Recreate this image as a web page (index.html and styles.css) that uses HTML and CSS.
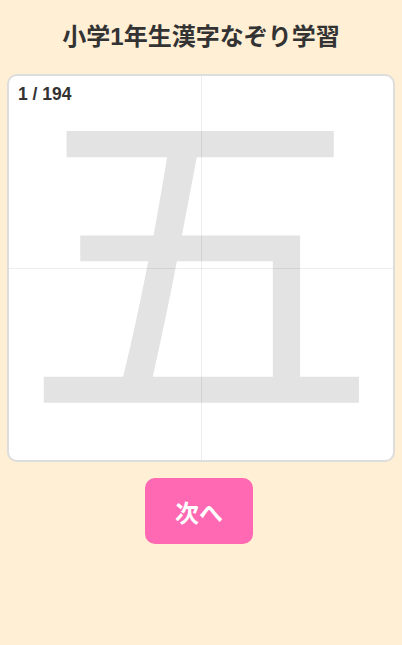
FILE: index.html
```html
<!DOCTYPE html>
<html lang="ja">

<head>
    <meta charset="UTF-8">
    <meta name="viewport" content="width=device-width, initial-scale=1.0">
    <title>小学1年生漢字なぞり学習</title>
    <link rel="stylesheet" href="styles.css">
</head>

<body>
<div class="app">
    <h1 class="title">小学1年生漢字なぞり学習</h1>

    <div class="board">
        <div class="counter">1 / 194</div>
        <div class="kanji">五</div>
        <div class="guide guide-v"></div>
        <div class="guide guide-h"></div>
    </div>

    <button class="next" type="button">次へ</button>
</div>
</body>

</html>
```

FILE: styles.css
```css
body {
    font-family: 'Liberation Sans', 'Noto Sans CJK JP', sans-serif;
    background-color: #ffefd5;
    margin: 0;
    color: #333;
}

.app {
    display: flex;
    flex-direction: column;
    align-items: center;
    padding: 0 7px;
}

.title {
    font-size: 24px;
    line-height: 34px;
    margin: 20px 0;
    font-weight: bold;
    color: #333;
}

.board {
    position: relative;
    width: 388px;
    height: 388px;
    box-sizing: border-box;
    background-color: #fff;
    border: 2px solid #ddd;
    border-radius: 10px;
    overflow: hidden;
    display: flex;
    align-items: center;
    justify-content: center;
}

.counter {
    position: absolute;
    top: 8px;
    left: 9px;
    font-size: 17.5px;
    font-weight: bold;
    color: #333;
}

.kanji {
    font-family: 'Noto Sans CJK JP', sans-serif;
    font-size: 354px;
    line-height: 1;
    color: #e3e3e3;
    margin-bottom: 56px;
}

/* 十字のガイド線 */
.guide {
    position: absolute;
    background-color: rgba(0, 0, 0, 0.07);
}

.guide-v {
    top: 0;
    bottom: 0;
    left: 50%;
    width: 1px;
}

.guide-h {
    left: 0;
    right: 0;
    top: 50%;
    height: 1px;
}

.next {
    margin-top: 16px;
    margin-right: 4px;
    background-color: #ff69b4;
    color: #fff;
    font-family: 'Liberation Sans', 'Noto Sans CJK JP', sans-serif;
    font-size: 24px;
    font-weight: bold;
    width: 108px;
    height: 66px;
    border: none;
    border-radius: 10px;
    cursor: pointer;
}
```
